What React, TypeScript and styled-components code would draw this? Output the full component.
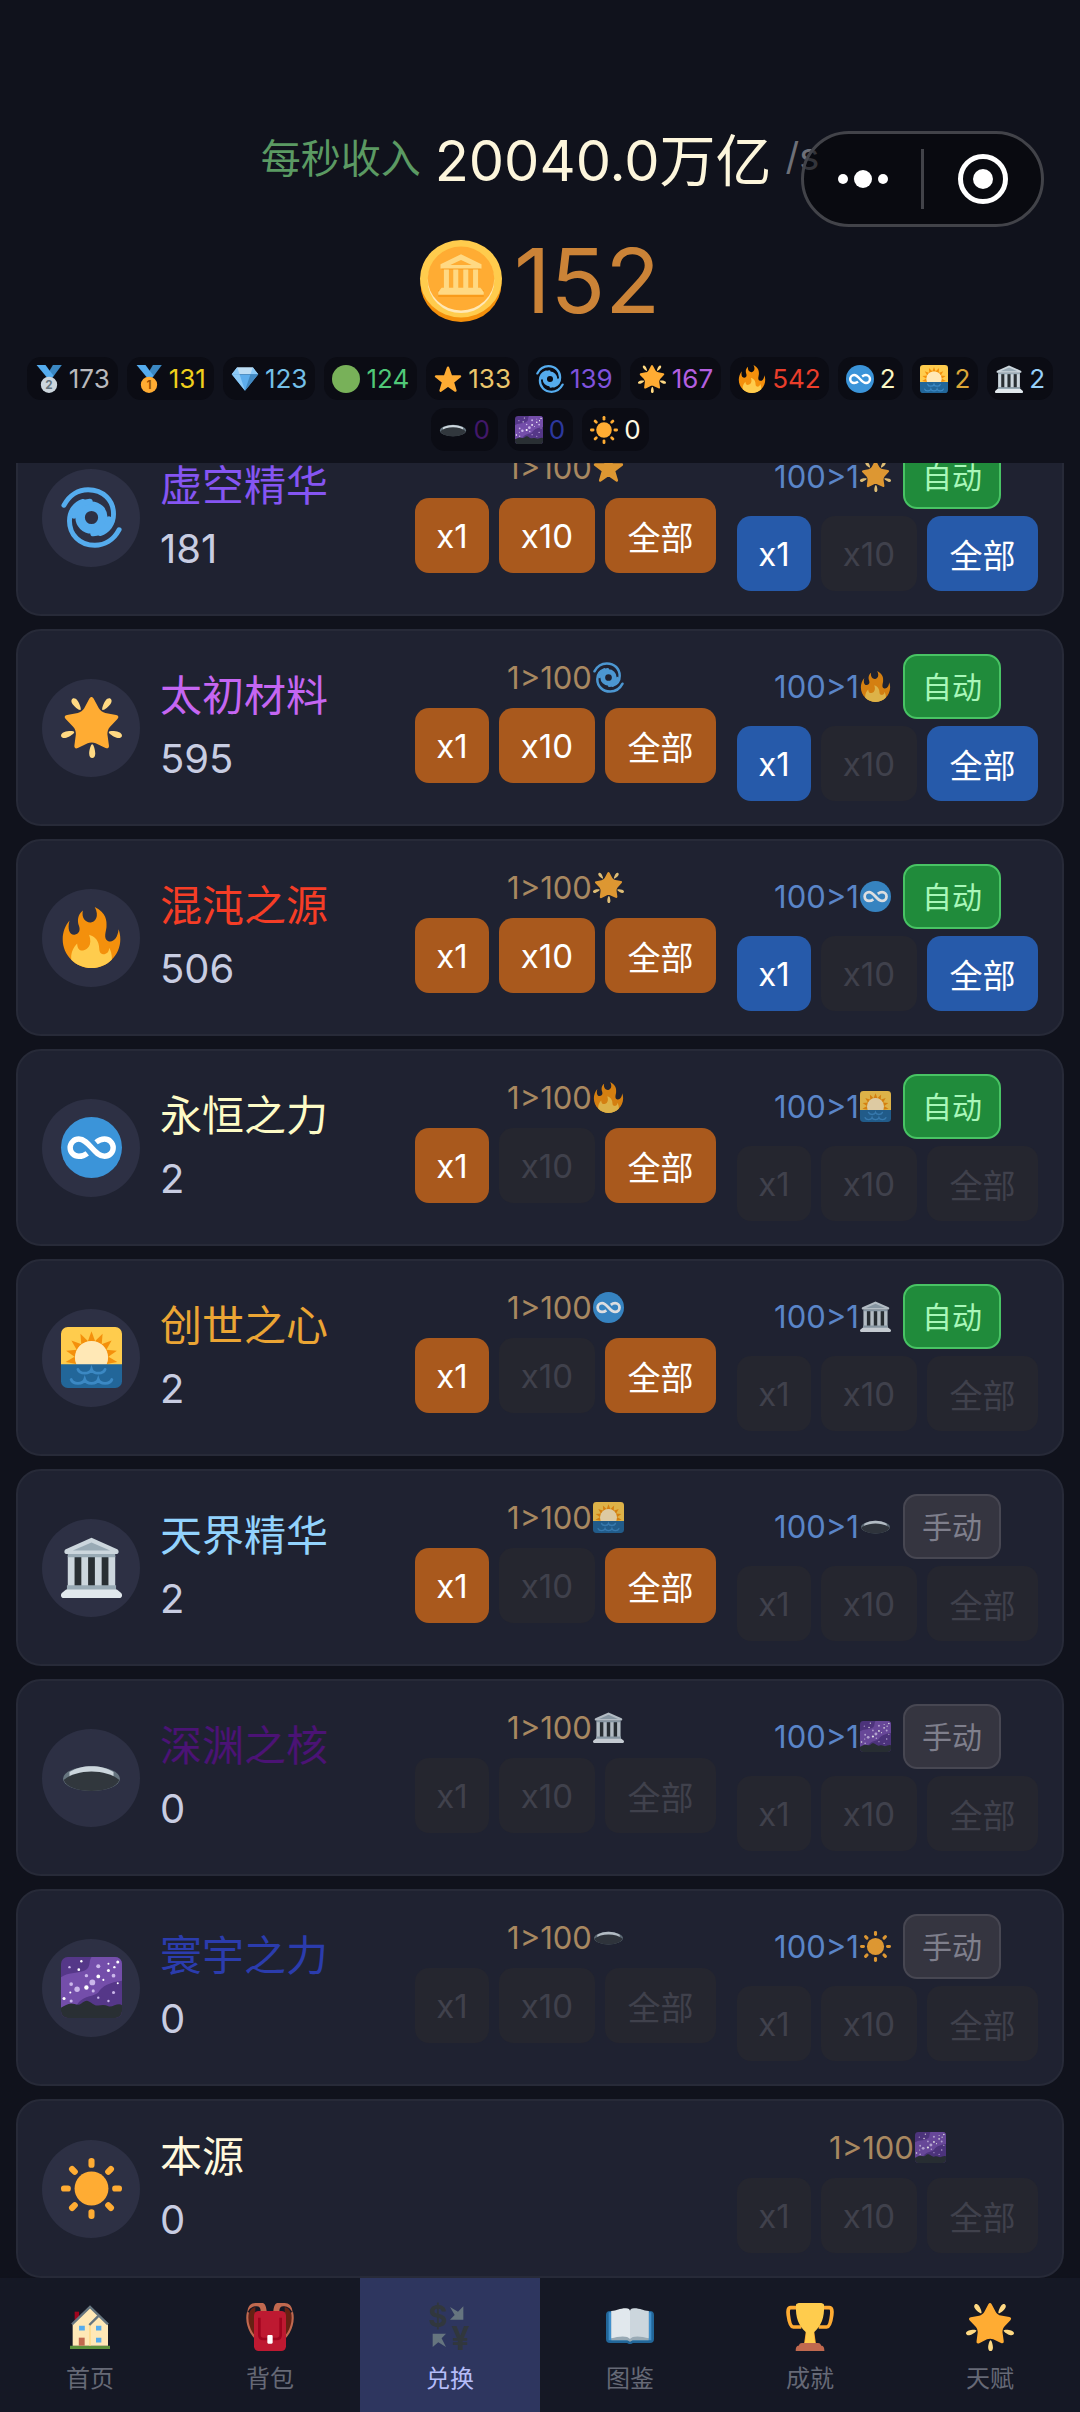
import React from 'react';
import styled, { createGlobalStyle, css } from 'styled-components';

const GlobalStyle = createGlobalStyle`
  *, *::before, *::after { box-sizing: border-box; }
  body {
    margin: 0;
    background: #10121c;
    font-family: Inter, "Noto Sans CJK SC", sans-serif;
    font-weight: 400;
  }
  button { font-family: inherit; }
`;

/* ---------- icons ---------- */

type IconName =
  | 'silver' | 'gold' | 'gem' | 'green' | 'star' | 'cyclone' | 'glow' | 'fire'
  | 'infinity' | 'sunrise' | 'temple' | 'hole' | 'galaxy' | 'sun' | 'coin'
  | 'home' | 'bag' | 'exchange' | 'book' | 'trophy';

const Medal = ({ disc, ink, label }: { disc: string; ink: string; label: string }) => (
  <>
    <path fill="#3B88C3" d="M23 0h11.500L22 17l-6-5z" />
    <path fill="#55ACEE" d="M2 0h11.500L24 14l-7 4z" />
    <circle cx="18" cy="25.500" r="10.500" fill={disc} />
    <text x="18" y="31" textAnchor="middle" fontSize="15" fontWeight="700" fill={ink}>{label}</text>
  </>
);

const sunRays = [0, 45, 90, 135, 180, 225, 270, 315];
const dawnRays = [-100, -75, -50, -25, 0, 25, 50, 75, 100];

const drawings: Record<IconName, React.ReactNode> = {
  silver: <Medal disc="#CCD6DD" ink="#66757F" label="2" />,
  gold: <Medal disc="#FFAC33" ink="#9E5200" label="1" />,
  gem: (
    <>
      <path fill="#BDDDF4" d="M8 3h20l7 9H1z" />
      <path fill="#8CCAF7" d="M8 3l3 9H1zM28 3l-3 9h10z" />
      <path fill="#5DADEC" d="M1 12h34L18 33z" />
      <path fill="#8CCAF7" d="M1 12h10l7 21z" />
      <path fill="#4289C1" d="M25 12h10L18 33z" />
    </>
  ),
  green: <circle cx="18" cy="18" r="18" fill="#78B159" />,
  star: (
    <path
      fill="#FFAC33"
      stroke="#FFAC33"
      strokeWidth="3"
      strokeLinejoin="round"
      d="M18 3.500l3.900 10.900 11.600.3-9.200 7.100 3.300 11.200L18 26.400 8.400 33l3.300-11.200-9.200-7.100 11.600-.3z"
    />
  ),
  cyclone: (
    <g fill="none" stroke="#55ACEE" strokeLinecap="round">
      <circle cx="18" cy="18" r="6.700" strokeWidth="5.600" />
      <path strokeWidth="2.900" d="M1.700 10.800C5 4.500 10.500 1.600 16 1.600 25 1.600 31 8 31 16c0 6-3.500 10-8 11.500" />
      <path strokeWidth="2.900" d="M34.300 25.200C31 31.500 25.500 34.400 20 34.400 11 34.400 5 28 5 20c0-6 3.500-10 8-11.500" />
      <path strokeWidth="3.400" d="M28.500 19c-1 4.500-4 8-9.500 8.400M7.500 17c1-4.500 4-8 9.500-8.400" />
    </g>
  ),
  glow: (
    <>
      <path fill="#FFAC33" d="M28.840 17.638c-.987 1.044-1.633 3.067-1.438 4.493l.892 6.441c.197 1.427-.701 2.087-1.996 1.469l-5.851-2.796c-1.295-.62-3.408-.611-4.700.018l-5.826 2.842c-1.291.629-2.193-.026-2.007-1.452l.843-6.449c.186-1.427-.475-3.444-1.470-4.481l-4.494-4.688c-.996-1.037-.655-2.102.755-2.365l6.370-1.188c1.410-.263 3.116-1.518 3.793-2.789L16.762.956c.675-1.271 1.789-1.274 2.473-.009L22.330 6.660c.686 1.265 2.400 2.507 3.814 2.758l6.378 1.141c1.412.252 1.761 1.314.774 2.359l-4.456 4.720z" />
      <path fill="#FFD983" d="M9.783 2.181c1.023 1.413 2.446 4.917 1.717 5.447-.728.531-3.607-1.910-4.630-3.323-1.022-1.413-.935-2.668-.131-3.254.804-.587 2.020-.282 3.044 1.130zm19.348 2.124C28.109 5.718 25.230 8.160 24.500 7.627c-.729-.53.695-4.033 1.719-5.445C27.242.768 28.457.463 29.262 1.051c.803.586.890 1.841-.131 3.254zM16.625 33.291c-.001-1.746.898-5.421 1.801-5.421.897 0 1.798 3.675 1.797 5.420 0 1.747-.804 2.712-1.800 2.710-.994.002-1.798-.962-1.798-2.709zm16.179-9.262c-1.655-.539-4.858-2.533-4.579-3.395.277-.858 4.037-.581 5.690-.041 1.655.540 2.321 1.605 2.013 2.556-.308.950-1.469 1.420-3.124.880zM2.083 20.594c1.655-.540 5.414-.817 5.694.044.276.857-2.928 2.854-4.581 3.392-1.654.540-2.818.070-3.123-.880-.308-.950.354-2.015 2.010-2.556z" />
    </>
  ),
  fire: (
    <>
      <path fill="#F4900C" d="M35 19c0-2.062-.367-4.039-1.040-5.868-.460 5.389-3.333 8.157-6.335 6.868-2.812-1.208-.917-5.917-.777-8.164.236-3.809-.012-8.169-6.931-11.794 2.875 5.500.333 8.917-2.333 9.125-2.958.231-5.667-2.542-4.667-7.042-3.238 2.386-3.332 6.402-2.333 9 1.042 2.708-.042 4.958-2.583 5.208-2.840.280-4.418-3.041-2.963-8.333C2.520 10.965 1 14.805 1 19c0 9.389 7.611 17 17 17s17-7.611 17-17z" />
      <path fill="#FFCC4D" d="M28.394 23.999c.148 3.084-2.561 4.293-4.019 3.709-2.106-.843-1.541-2.291-2.083-5.291s-2.625-5.083-5.708-6c2.250 6.333-1.247 8.667-3.080 9.084-1.872.426-3.753-.001-3.968-4.007C7.352 23.668 6 26.676 6 30c0 .368.023.730.055 1.090C9.125 34.124 13.342 36 18 36s8.875-1.876 11.945-4.910c.032-.360.055-.722.055-1.090 0-2.187-.584-4.236-1.606-6.001z" />
    </>
  ),
  infinity: (
    <>
      <circle cx="18" cy="18" r="18" fill="#3B94D9" />
      <path
        fill="none"
        stroke="#FFF"
        strokeWidth="3.200"
        d="M15.500 21.400c-1.500 1.200-3.200 1.800-5 1.800a5.100 5.100 0 0 1 0-10.200c6 0 9 10.200 15.200 10.200a5.100 5.100 0 0 0 0-10.200c-1.800 0-3.500.700-5 1.900"
      />
    </>
  ),
  sunrise: (
    <>
      <path fill="#FFCC4D" d="M36 23V4a4 4 0 0 0-4-4H4a4 4 0 0 0-4 4v19z" />
      {dawnRays.map((a) => (
        <path key={a} fill="#F4900C" transform={`rotate(${a} 18 18)`} d="M18 2.500l2.200 6h-4.400z" />
      ))}
      <circle cx="18" cy="18" r="9.800" fill="#FFE8B6" />
      <path fill="#226699" d="M0 22h36v10a4 4 0 0 1-4 4H4a4 4 0 0 1-4-4z" />
      <path
        fill="none"
        stroke="#3B88C3"
        strokeWidth="1.700"
        strokeLinecap="round"
        d="M10 25c1 3 7 3 8 0 1 3 7 3 8 0M6 31c1 3 7 3 8 0 1 3 7 3 8 0 1 3 7 3 8 0"
      />
    </>
  ),
  temple: (
    <>
      <path fill="#292F33" d="M6 12h24v17H6z" />
      <path fill="#CCD6DD" d="M4 11h4v18H4zM12 11h4v18h-4zM20 11h4v18h-4zM28 11h4v18h-4z" />
      <path fill="#99AAB5" d="M4 9.500h28V12H4zM3.500 28.500h29v3h-29z" />
      <path fill="#CCD6DD" d="M18 .500l15.200 6.800c1.200.600 1 2.700-.200 2.700H3c-1.200 0-1.400-2.100-.2-2.700z" />
      <path fill="#99AAB5" d="M18 3.200L29 8H7z" />
      <path fill="#E1E8ED" d="M3 31h30l2.500 2c1 1 .5 3-1 3h-33c-1.500 0-2-2-1-3z" />
    </>
  ),
  hole: (
    <>
      <ellipse cx="18" cy="18.700" rx="16.800" ry="7.300" fill="#66757F" />
      <path fill="#CCD6DD" d="M5 14.800c7-4.500 19-4.500 26 0v4H5z" />
      <path fill="#31373D" d="M1.600 19.500c7.500-6.800 25.300-6.800 32.800 0C33 23.500 26.500 26 18 26S3 23.500 1.600 19.500z" />
    </>
  ),
  galaxy: (
    <>
      <rect width="36" height="36" rx="4" fill="#553788" />
      <path fill="#744EAA" d="M36 4a4 4 0 0 0-4-4H18c-2 3 0 6-4 8-5 2-10 1-14 4v19h7c5-1 4-6 10-6 5 0 5-6 10-8 4-2 6-1 9-2z" />
      <path fill="#553788" d="M36 14c-7 1-12 3-14 7-3 3-9 1-13 8v4h27z" />
      <g fill="#CBB7EA">
        <circle cx="22" cy="5.500" r="1.200" /><circle cx="18.500" cy="15" r="1.700" />
        <circle cx="9.500" cy="19" r="1.600" /><circle cx="6" cy="16" r="1.100" />
        <circle cx="31" cy="11" r="1.100" /><circle cx="15" cy="11" r="1" />
        <circle cx="31" cy="21" r=".9" /><circle cx="6" cy="26" r=".9" />
        <circle cx="19" cy="20" r=".9" /><circle cx="28" cy="26" r=".7" />
        <circle cx="22" cy="24" r=".7" /><circle cx="5" cy="6" r=".7" />
      </g>
      <g fill="#FFF">
        <circle cx="22" cy="11.500" r="1.100" /><circle cx="15" cy="18" r="1.300" />
        <circle cx="28" cy="8" r=".9" /><circle cx="31.500" cy="6" r=".7" />
        <circle cx="33.500" cy="3" r=".9" /><circle cx="10.500" cy="7.500" r=".8" />
        <circle cx="12" cy="2.500" r=".7" /><circle cx="1.800" cy="24.500" r=".9" />
        <circle cx="5.500" cy="21" r=".6" /><circle cx="25" cy="13.500" r=".6" />
        <circle cx="33.500" cy="15.500" r=".6" /><circle cx="28" cy="4" r=".6" />
      </g>
      <path fill="#292F33" d="M0 30c2-1 4-2.500 6-2.500S10 29 12 27.500s3-2 4.500-1.300S20 29 22 28.600s4-.600 6 .400 6-2.500 8-.500V32a4 4 0 0 1-4 4H4a4 4 0 0 1-4-4z" />
    </>
  ),
  sun: (
    <g fill="#FFAC33">
      <circle cx="18" cy="18" r="10" />
      {sunRays.map((a) => (
        <rect key={a} x="16.200" y="0" width="3.600" height="5.800" rx="1.700" transform={`rotate(${a} 18 18)`} />
      ))}
    </g>
  ),
  coin: (
    <>
      <ellipse cx="18" cy="19" rx="17.800" ry="17" fill="#F4900C" />
      <ellipse cx="18" cy="17" rx="18" ry="17" fill="#FFCC4D" />
      <ellipse cx="18" cy="17.800" rx="14.600" ry="14.300" fill="#FFE8B6" />
      <ellipse cx="18" cy="16.900" rx="14.600" ry="14" fill="#FFAC33" />
      <path fill="#F4900C" opacity=".6" d="M8 22h20v3H8zM9.500 11.500h17V13h-17z" />
      <path fill="#FFD983" fillRule="evenodd" d="M18 6.300l9 4.300v1.900H9v-1.900zm0 2.500L13.300 11h9.400z" />
      <path fill="#FFD983" d="M10.500 13h2.200v8h-2.200zM14.600 13h2.200v8h-2.200zM19 13h2.200v8H19zM23.300 13h2.200v8h-2.200zM9.500 21h17l1.500 1.800V24H8v-1.200z" />
    </>
  ),
  home: (
    <>
      <path fill="#A0041E" d="M6.500 6.500h3.300v9H6.500z" />
      <path fill="#5C913B" d="M3 32h30v2.500H3z" />
      <path fill="#FFE8B6" d="M5 15.500L18 3l13.500 13v16H5z" />
      <path fill="#FFD983" d="M17.500 16h1v16h-1z" />
      <path fill="none" stroke="#66757F" strokeWidth="1.800" d="M4.500 16L18 3l13.500 13M17.500 16.500L24 10" />
      <path fill="#55ACEE" d="M9.800 17h4.300v3.700H9.800zM22.500 17h4v3.700h-4zM22.500 26h4v3.700h-4z" />
      <path fill="#C1694F" d="M9.600 26H14v6H9.600z" />
    </>
  ),
  bag: (
    <>
      <path fill="#662113" d="M7 3C1 4 1 14 2 19l5 9V8zM29 3c6 1 6 11 5 16l-5 9V8z" />
      <path fill="none" stroke="#C1694F" strokeWidth="1.600" d="M7 26C2 21 0 13 1.500 7M29 26c5-5 7-13 5.500-19" />
      <path fill="#C1694F" d="M1 8C1 2 4 0 7 0h5c2 0 3 2 3.500 6H11c0-2-1-3.500-3-3.500S2.500 3 1 8zM35 8c0-6-3-8-6-8h-5c-2 0-3 2-3.500 6H25c0-2 1-3.500 3-3.500S33.500 3 35 8z" />
      <rect x="6" y="6" width="24" height="30" rx="3.500" fill="#BE1931" />
      <path fill="none" stroke="#A0041E" strokeWidth="2" d="M10 11v13c0 2 1 3 3 3h10c2 0 3-1 3-3V11" />
      <rect x="16" y="24" width="4" height="6.500" rx=".8" fill="#FFF" />
    </>
  ),
  exchange: (
    <>
      <g fill="#31373D" fontWeight="700">
        <text x="9" y="18" textAnchor="middle" fontSize="22">$</text>
        <text x="26" y="35" textAnchor="middle" fontSize="24">¥</text>
      </g>
      <path fill="#66757F" d="M28 2.500v10H18l3.500-3.500L18 3l6 3.500zM5 33V23h10l-3.300 3.500L15 33l-5.800-3.500z" />
    </>
  ),
  book: (
    <>
      <path fill="#226699" d="M0 9c0-2 1-3 3-3h30c2 0 3 1 3 3v18c0 2-1 3-3 3H20c-.5 1-3.500 1-4 0H3c-2 0-3-1-3-3z" />
      <path fill="#55ACEE" opacity=".6" d="M2 7h32v21H2z" />
      <path fill="#99AAB5" d="M4 6h28v22H20l-2 1-2-1H4z" />
      <path fill="#E1E8ED" d="M4 6c4 0 6-2 11-2 2 0 3 1 3 2v21c-2-3-9-2-14-.500z" />
      <path fill="#CCD6DD" d="M32 6c-4 0-6-2-11-2-2 0-3 1-3 2v21c2-3 9-2 14-.500z" />
    </>
  ),
  trophy: (
    <>
      <path fill="none" stroke="#FFAC33" strokeWidth="2.800" strokeLinejoin="round" d="M9 3.500H3.500C1.500 3.500 1.300 6 1.700 9c.5 4 1.300 9 3.800 9h6M27 3.500h5.500c2 0 2.200 2.500 1.800 5.500-.5 4-1.300 9-3.800 9h-6" />
      <path fill="#FFAC33" d="M15 20h6l1.500 11h-9z" />
      <path fill="#FFCC4D" d="M7.500 1.500C7.500.500 9 0 11 0h14c2 0 3.500.500 3.500 1.500C29 11 26.500 17 21 22c-.3 2 0 5 1 8h-8c1-3 1.300-6 1-8C9.500 17 7 11 7.500 1.500z" />
      <path fill="#C1694F" d="M12 30h12c1.500 0 2 1 2.500 2 1.500 0 2.300 1 2.300 4H7.300c0-3 .7-4 2.200-4 .5-1 1-2 2.500-2z" />
    </>
  ),
};

const IconSvg = styled.svg<{ $size: number }>`
  width: ${(p) => p.$size}px;
  height: ${(p) => p.$size}px;
  flex: none;
  display: block;
  overflow: visible;
`;

const Icon = ({ name, size }: { name: IconName; size: number }) => (
  <IconSvg $size={size} viewBox="0 0 36 36" aria-hidden="true">
    {drawings[name]}
  </IconSvg>
);

/* ---------- layout ---------- */

const Screen = styled.div`
  height: 100vh;
  display: flex;
  flex-direction: column;
  background: #10121c;
`;

const Header = styled.header`
  position: relative;
  flex: none;
  padding: 108px 20px 12px;
  display: flex;
  flex-direction: column;
  align-items: center;
`;

const Income = styled.div`
  display: flex;
  align-items: center;
  height: 96px;
  white-space: nowrap;
`;

const IncomeLabel = styled.span`
  font-size: 40px;
  color: #5b9a63;
`;

const IncomeValue = styled.strong`
  margin: 0 14px;
  font-size: 56px;
  font-weight: 400;
  color: #fdf6dc;
`;

const IncomeUnit = styled.span`
  font-size: 38px;
  color: #6e7078;
`;

const Balance = styled.div`
  display: flex;
  align-items: center;
  gap: 12px;
  height: 96px;
  margin: 29px 0 28px;
  font-size: 90px;
  line-height: 96px;
  color: #cb8337;
`;

const Wallet = styled.ul`
  list-style: none;
  margin: 0;
  padding: 0;
  display: flex;
  flex-wrap: wrap;
  justify-content: center;
  gap: 8px 9px;
`;

const Chip = styled.li<{ $color: string }>`
  display: flex;
  align-items: center;
  gap: 6px;
  height: 43px;
  padding: 0 8px;
  border-radius: 14px;
  background: #0b0c14;
  font-size: 26px;
  color: ${(p) => p.$color};
`;

const Capsule = styled.div`
  position: absolute;
  top: 131px;
  right: 36px;
  width: 243px;
  height: 96px;
  display: flex;
  align-items: center;
  border: 3px solid #424349;
  border-radius: 48px;
  background: rgba(3, 3, 8, 0.55);
`;

const CapsuleButton = styled.button`
  flex: 1;
  height: 100%;
  display: flex;
  align-items: center;
  justify-content: center;
  padding: 0;
  border: 0;
  background: none;
`;

const CapsuleDivider = styled.span`
  width: 3px;
  height: 60px;
  background: #424349;
`;

const Scroller = styled.main`
  flex: 1;
  min-height: 0;
  display: flex;
  flex-direction: column-reverse;
  overflow-y: auto;
  scrollbar-width: none;
`;

const List = styled.ul`
  list-style: none;
  margin: 0;
  padding: 0 16px;
  display: flex;
  flex-direction: column;
  gap: 13px;
`;

const Card = styled.li`
  flex: none;
  display: flex;
  align-items: center;
  padding: 23px 24px;
  border: 2px solid #272a38;
  border-radius: 25px;
  background: #1f2231;
`;

const Avatar = styled.div`
  flex: none;
  width: 98px;
  height: 98px;
  display: flex;
  align-items: center;
  justify-content: center;
  border-radius: 50%;
  background: #2d3044;
`;

const Info = styled.div`
  flex: 1;
  padding-left: 20px;
`;

const Name = styled.h2<{ $color: string }>`
  margin: 0;
  font-size: 42px;
  line-height: 62px;
  font-weight: 400;
  color: ${(p) => p.$color};
`;

const Count = styled.p`
  margin: 0;
  font-size: 40px;
  line-height: 64px;
  color: #c8cde2;
`;

const Trades = styled.div`
  align-self: flex-start;
  display: flex;
  align-items: flex-start;
  gap: 21px;
`;

const Trade = styled.section`
  display: flex;
  flex-direction: column;
  align-items: center;
  gap: 7px;
`;

const TradeHead = styled.div`
  display: flex;
  align-items: center;
  gap: 12px;
  min-height: 47px;
`;

const Rate = styled.span<{ $tone: Tone }>`
  display: flex;
  align-items: center;
  gap: 1px;
  font-size: 31px;
  line-height: 40px;
  opacity: 0.85;
  color: ${(p) => (p.$tone === 'down' ? '#c09a69' : '#6597e2')};
`;

const ModeButton = styled.button<{ $on: boolean }>`
  width: 98px;
  height: 65px;
  padding: 0;
  border-radius: 14px;
  font-size: 30px;
  line-height: 36px;
  ${(p) =>
    p.$on
      ? css`
          border: 2px solid #48c364;
          background: #208b3b;
          color: #a9f7b9;
        `
      : css`
          border: 2px solid #474752;
          background: #353540;
          color: #7f7f8c;
        `}
`;

const Amounts = styled.div`
  display: grid;
  grid-template-columns: 74px 96px 111px;
  gap: 10px;
`;

const AmountButton = styled.button<{ $tone: Tone }>`
  height: 75px;
  padding: 0;
  border: 0;
  border-radius: 14px;
  font-size: 33px;
  color: #fff;
  background: ${(p) => (p.$tone === 'down' ? '#a9591d' : '#265aaa')};

  &:disabled {
    color: #40414c;
    background: #25262f;
  }
`;

const TabBar = styled.nav`
  flex: none;
  display: grid;
  grid-template-columns: repeat(6, 1fr);
  background: #151825;
`;

const Tab = styled.a<{ $active: boolean }>`
  display: flex;
  flex-direction: column;
  align-items: center;
  gap: 11px;
  padding: 25px 0 16px;
  font-size: 24px;
  line-height: 34px;
  text-decoration: none;
  color: ${(p) => (p.$active ? '#b4bcf8' : '#666976')};
  background: ${(p) => (p.$active ? '#2e365f' : 'transparent')};
`;

/* ---------- data ---------- */

type Tone = 'down' | 'up';

interface Offer {
  target: IconName;
  enabled: [boolean, boolean, boolean];
  auto?: boolean;
}

interface Material {
  name: string;
  icon: IconName;
  color: string;
  count: number;
  down: Offer;
  up?: Offer;
}

const wallet: { icon: IconName; value: number; color: string }[] = [
  { icon: 'silver', value: 173, color: '#b9b9bd' },
  { icon: 'gold', value: 131, color: '#f0d01c' },
  { icon: 'gem', value: 123, color: '#74c0e8' },
  { icon: 'green', value: 124, color: '#50c878' },
  { icon: 'star', value: 133, color: '#ecc66c' },
  { icon: 'cyclone', value: 139, color: '#7f52dc' },
  { icon: 'glow', value: 167, color: '#b45fe0' },
  { icon: 'fire', value: 542, color: '#ea3e2b' },
  { icon: 'infinity', value: 2, color: '#fbf8c6' },
  { icon: 'sunrise', value: 2, color: '#dba638' },
  { icon: 'temple', value: 2, color: '#97d0fa' },
  { icon: 'hole', value: 0, color: '#42186a' },
  { icon: 'galaxy', value: 0, color: '#2c389e' },
  { icon: 'sun', value: 0, color: '#fff9e2' },
];

const materials: Material[] = [
  {
    name: '虚空精华', icon: 'cyclone', color: '#8555f2', count: 181,
    down: { target: 'star', enabled: [true, true, true] },
    up: { target: 'glow', enabled: [true, false, true], auto: true },
  },
  {
    name: '太初材料', icon: 'glow', color: '#c566f2', count: 595,
    down: { target: 'cyclone', enabled: [true, true, true] },
    up: { target: 'fire', enabled: [true, false, true], auto: true },
  },
  {
    name: '混沌之源', icon: 'fire', color: '#f53d26', count: 506,
    down: { target: 'glow', enabled: [true, true, true] },
    up: { target: 'infinity', enabled: [true, false, true], auto: true },
  },
  {
    name: '永恒之力', icon: 'infinity', color: '#fdfbc6', count: 2,
    down: { target: 'fire', enabled: [true, false, true] },
    up: { target: 'sunrise', enabled: [false, false, false], auto: true },
  },
  {
    name: '创世之心', icon: 'sunrise', color: '#eba534', count: 2,
    down: { target: 'infinity', enabled: [true, false, true] },
    up: { target: 'temple', enabled: [false, false, false], auto: true },
  },
  {
    name: '天界精华', icon: 'temple', color: '#92d3fd', count: 2,
    down: { target: 'sunrise', enabled: [true, false, true] },
    up: { target: 'hole', enabled: [false, false, false], auto: false },
  },
  {
    name: '深渊之核', icon: 'hole', color: '#4b1375', count: 0,
    down: { target: 'temple', enabled: [false, false, false] },
    up: { target: 'galaxy', enabled: [false, false, false], auto: false },
  },
  {
    name: '寰宇之力', icon: 'galaxy', color: '#2b3cad', count: 0,
    down: { target: 'hole', enabled: [false, false, false] },
    up: { target: 'sun', enabled: [false, false, false], auto: false },
  },
  {
    name: '本源', icon: 'sun', color: '#fff8dc', count: 0,
    down: { target: 'galaxy', enabled: [false, false, false] },
  },
];

const tabs: { label: string; icon: IconName }[] = [
  { label: '首页', icon: 'home' },
  { label: '背包', icon: 'bag' },
  { label: '兑换', icon: 'exchange' },
  { label: '图鉴', icon: 'book' },
  { label: '成就', icon: 'trophy' },
  { label: '天赋', icon: 'glow' },
];

const amounts = ['x1', 'x10', '全部'];

const TradePanel = ({ offer, tone }: { offer: Offer; tone: Tone }) => (
  <Trade>
    <TradeHead>
      <Rate $tone={tone}>
        {tone === 'down' ? '1>100' : '100>1'}
        <Icon name={offer.target} size={31} />
      </Rate>
      {offer.auto !== undefined && (
        <ModeButton type="button" $on={offer.auto}>{offer.auto ? '自动' : '手动'}</ModeButton>
      )}
    </TradeHead>
    <Amounts>
      {amounts.map((label, i) => (
        <AmountButton key={label} type="button" $tone={tone} disabled={!offer.enabled[i]}>
          {label}
        </AmountButton>
      ))}
    </Amounts>
  </Trade>
);

export default function App() {
  return (
    <>
      <GlobalStyle />
      <Screen>
        <Header>
          <Income>
            <IncomeLabel>每秒收入</IncomeLabel>
            <IncomeValue>20040.0万亿</IncomeValue>
            <IncomeUnit>/s</IncomeUnit>
          </Income>
          <Balance>
            <Icon name="coin" size={82} />
            <span>152</span>
          </Balance>
          <Wallet>
            {wallet.map((w) => (
              <Chip key={w.icon} $color={w.color}>
                <Icon name={w.icon} size={28} />
                {w.value}
              </Chip>
            ))}
          </Wallet>
          <Capsule>
            <CapsuleButton type="button" aria-label="更多">
              <svg width="52" height="20" viewBox="0 0 52 20" fill="#fff">
                <circle cx="6" cy="10" r="5" />
                <circle cx="26" cy="10" r="9" />
                <circle cx="46" cy="10" r="5" />
              </svg>
            </CapsuleButton>
            <CapsuleDivider />
            <CapsuleButton type="button" aria-label="关闭">
              <svg width="52" height="52" viewBox="0 0 52 52">
                <circle cx="26" cy="26" r="22.500" fill="none" stroke="#fff" strokeWidth="5" />
                <circle cx="26" cy="26" r="10" fill="#fff" />
              </svg>
            </CapsuleButton>
          </Capsule>
        </Header>

        <Scroller>
          <List>
            {materials.map((m) => (
              <Card key={m.name}>
                <Avatar>
                  <Icon name={m.icon} size={61} />
                </Avatar>
                <Info>
                  <Name $color={m.color}>{m.name}</Name>
                  <Count>{m.count}</Count>
                </Info>
                <Trades>
                  <TradePanel offer={m.down} tone="down" />
                  {m.up && <TradePanel offer={m.up} tone="up" />}
                </Trades>
              </Card>
            ))}
          </List>
        </Scroller>

        <TabBar>
          {tabs.map((t) => (
            <Tab key={t.label} href="#" $active={t.label === '兑换'}>
              <Icon name={t.icon} size={48} />
              {t.label}
            </Tab>
          ))}
        </TabBar>
      </Screen>
    </>
  );
}
